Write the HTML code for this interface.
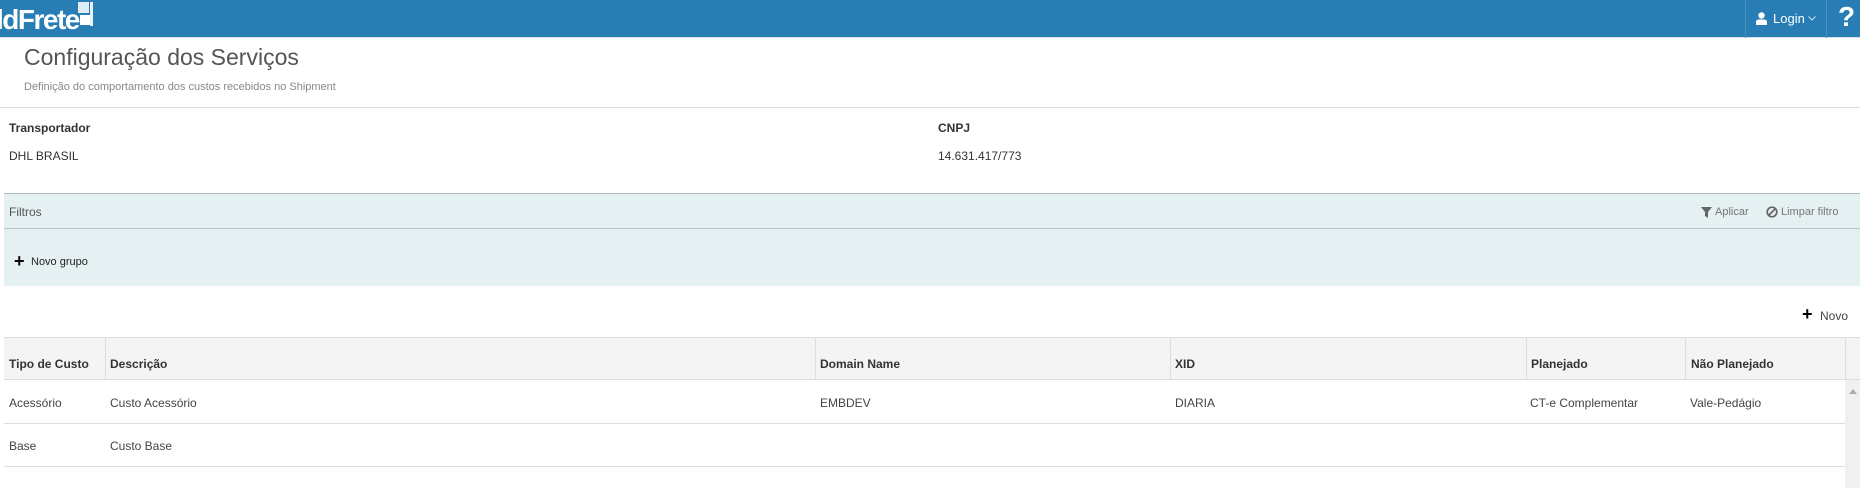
<!DOCTYPE html>
<html><head><meta charset="utf-8"><style>
*{box-sizing:border-box;margin:0;padding:0}
body{width:1860px;height:488px;overflow:hidden;background:#fff;font-family:"Liberation Sans",sans-serif;color:#333;position:relative}
.top{position:absolute;left:0;top:0;width:1860px;height:38px;background:#277db4;border-bottom:1px solid #ddd}
.abs{position:absolute;white-space:nowrap}
.logo{left:-4px;top:4px;color:#fff;font-size:28px;letter-spacing:-1.5px;font-weight:bold}
.sq{position:absolute;background:#fff}
.th{font-weight:bold;font-size:12px;color:#333}
.td{font-size:12px;color:#444}
.hl{position:absolute;height:1px;background:#ddd}
.vl{position:absolute;width:1px;background:#ddd}
.plus{font-size:18px;font-weight:bold;color:#000;line-height:1}
</style></head><body>
<div class="top"></div>
<div class="abs logo">ldFrete</div>
<div class="sq" style="left:78px;top:2px;width:11px;height:11px;opacity:.85"></div>
<div class="sq" style="left:90px;top:2px;width:3px;height:24px;opacity:.9"></div>
<div class="sq" style="left:80px;top:15px;width:10px;height:10px"></div>
<div class="vl" style="left:1745px;top:0;height:38px;background:#4a92c0"></div>
<div class="vl" style="left:1826px;top:0;height:38px;background:#4a92c0"></div>
<svg class="abs" style="left:1756px;top:12px" width="11" height="13" viewBox="0 0 11 13"><circle cx="5.5" cy="3.5" r="3.2" fill="#fff"/><path d="M0 13 V10 Q0 7.5 3 7.5 H8 Q11 7.5 11 10 V13Z" fill="#fff"/></svg>
<div class="abs" style="left:1773px;top:11px;color:#fff;font-size:13px">Login</div>
<svg class="abs" style="left:1808px;top:16px" width="8" height="5"><path d="M0.5 0.5L4 4L7.5 0.5" fill="none" stroke="#cfe3f0"/></svg>
<div class="abs" style="left:1838px;top:1px;color:#fff;font-size:28px;font-weight:bold">?</div>

<div class="abs" style="left:24px;top:44px;font-size:23px;color:#555">Configuração dos Serviços</div>
<div class="abs" style="left:24px;top:81px;font-size:11px;color:#888">Definição do comportamento dos custos recebidos no Shipment</div>
<div class="hl" style="left:0;top:107px;width:1860px"></div>

<div class="abs th" style="left:9px;top:121px">Transportador</div>
<div class="abs td" style="left:9px;top:149px;color:#333">DHL BRASIL</div>
<div class="abs th" style="left:938px;top:121px">CNPJ</div>
<div class="abs td" style="left:938px;top:149px;color:#333">14.631.417/773</div>

<div class="abs" style="left:4px;top:193px;width:1856px;height:93px;background:#e5f0f2;border-top:1px solid #b0b8bb"></div>
<div class="hl" style="left:4px;top:228px;width:1856px;background:#b8c4c6"></div>
<div class="abs" style="left:9px;top:205px;font-size:12px;color:#555">Filtros</div>
<svg class="abs" style="left:1701px;top:207px" width="11" height="11" viewBox="0 0 11 11"><path d="M0 0H11L7 5V11L4 9V5Z" fill="#666"/></svg>
<div class="abs" style="left:1715px;top:206px;font-size:11px;color:#777">Aplicar</div>
<svg class="abs" style="left:1766px;top:206px" width="12" height="12" viewBox="0 0 12 12"><circle cx="6" cy="6" r="4.8" fill="none" stroke="#666" stroke-width="1.7"/><path d="M2.5 9.5L9.5 2.5" stroke="#666" stroke-width="1.7"/></svg>
<div class="abs" style="left:1781px;top:206px;font-size:11px;color:#777">Limpar filtro</div>
<div class="abs plus" style="left:14px;top:252px">+</div>
<div class="abs" style="left:31px;top:256px;font-size:11px;color:#222">Novo grupo</div>

<div class="abs plus" style="left:1802px;top:305px">+</div>
<div class="abs" style="left:1820px;top:309px;font-size:12px;color:#444">Novo</div>

<div class="abs" style="left:4px;top:337px;width:1856px;height:43px;background:#f4f4f4;border-top:1px solid #ddd;border-bottom:1px solid #ddd"></div>
<div class="vl" style="left:105px;top:337px;height:43px"></div>
<div class="vl" style="left:815px;top:337px;height:43px"></div>
<div class="vl" style="left:1170px;top:337px;height:43px"></div>
<div class="vl" style="left:1526px;top:337px;height:43px"></div>
<div class="vl" style="left:1685px;top:337px;height:43px"></div>
<div class="vl" style="left:1845px;top:337px;height:43px"></div>
<div class="abs" style="left:1845px;top:380px;width:15px;height:108px;background:#f0f0f0"></div>
<svg class="abs" style="left:1849px;top:389px" width="8" height="5"><path d="M0 5L4 0L8 5Z" fill="#aaa"/></svg>
<div class="abs th" style="left:9px;top:357px">Tipo de Custo</div>
<div class="abs th" style="left:110px;top:357px">Descrição</div>
<div class="abs th" style="left:820px;top:357px">Domain Name</div>
<div class="abs th" style="left:1175px;top:357px">XID</div>
<div class="abs th" style="left:1531px;top:357px">Planejado</div>
<div class="abs th" style="left:1691px;top:357px">Não Planejado</div>

<div class="abs td" style="left:9px;top:396px">Acessório</div>
<div class="abs td" style="left:110px;top:396px">Custo Acessório</div>
<div class="abs td" style="left:820px;top:396px">EMBDEV</div>
<div class="abs td" style="left:1175px;top:396px">DIARIA</div>
<div class="abs td" style="left:1530px;top:396px">CT-e Complementar</div>
<div class="abs td" style="left:1690px;top:396px">Vale-Pedágio</div>
<div class="hl" style="left:4px;top:423px;width:1841px"></div>
<div class="abs td" style="left:9px;top:439px">Base</div>
<div class="abs td" style="left:110px;top:439px">Custo Base</div>
<div class="hl" style="left:4px;top:466px;width:1841px"></div>
</body></html>
